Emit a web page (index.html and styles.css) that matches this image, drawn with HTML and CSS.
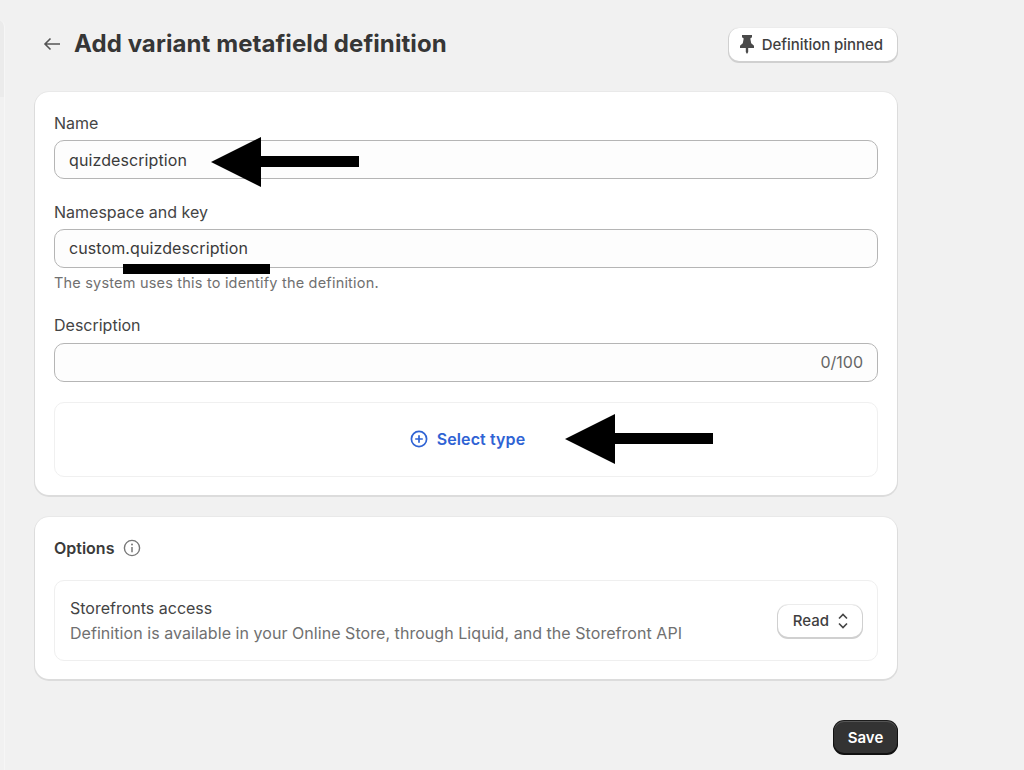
FILE: index.html
```html
<!DOCTYPE html>
<html lang="en">
<head>
<meta charset="utf-8">
<title>Add variant metafield definition</title>
<link rel="stylesheet" href="styles.css">
</head>
<body>
<div class="sidebar-edge"></div>
<main class="page">
  <header class="top">
    <div class="top-left">
      <svg class="back" viewBox="0 0 18 14" width="18" height="14"><path d="M17 7H2M7.5 1.500 2 7l5.500 5.500" fill="none" stroke="#555" stroke-width="1.600"/></svg>
      <h1>Add variant metafield definition</h1>
    </div>
    <button class="btn pin">
      <svg viewBox="0 0 16 20" width="16" height="20"><path d="M3 1h10v2.200l-1.700 1.300.9 4.700 2.800 2.500V14H9.200v4L8 20l-1.200-2v-4H1v-2.300l2.800-2.500.9-4.700L3 3.200z" fill="#4a4a4a"/></svg>
      Definition pinned
    </button>
  </header>

  <section class="card first">
    <div class="field">
      <label>Name</label>
      <div class="input">quizdescription</div>
    </div>
    <div class="field">
      <label>Namespace and key</label>
      <div class="input">custom.quizdescription</div>
      <p class="help">The system uses this to identify the definition.</p>
    </div>
    <div class="field desc">
      <label>Description</label>
      <div class="input count">0/100</div>
    </div>
    <div class="select-type">
      <svg viewBox="0 0 18 18" width="18" height="18"><circle cx="9" cy="9" r="7.600" fill="none" stroke="#2f63d4" stroke-width="1.700"/><path d="M9 5.200v7.600M5.200 9h7.600" stroke="#2f63d4" stroke-width="1.700"/></svg>
      <span>Select type</span>
    </div>
  </section>

  <section class="card second">
    <div class="opt-head">
      <h2>Options</h2>
      <svg viewBox="0 0 18 18" width="18" height="18"><circle cx="9" cy="9" r="7.600" fill="none" stroke="#777" stroke-width="1.400"/><circle cx="9" cy="5.400" r="1" fill="#777"/><path d="M9 8v5.200" stroke="#777" stroke-width="1.500"/></svg>
    </div>
    <div class="access">
      <div>
        <div class="access-title">Storefronts access</div>
        <div class="access-sub">Definition is available in your Online Store, through Liquid, and the Storefront API</div>
      </div>
      <button class="btn read">
        Read
        <svg viewBox="0 0 12 18" width="12" height="18"><path d="M2 6.500 6 2.500l4 4M2 11.500l4 4 4-4" fill="none" stroke="#444" stroke-width="1.600"/></svg>
      </button>
    </div>
  </section>

  <div class="actions"><button class="save">Save</button></div>
</main>

<svg class="mark mark-name" viewBox="0 0 148 50" width="148" height="50"><path d="M0 25 50 0v19h98v11H50v20z" fill="#000"/></svg>
<div class="mark mark-line"></div>
<svg class="mark mark-type" viewBox="0 0 148 50" width="148" height="50"><path d="M0 25 50 0v19h98v11H50v20z" fill="#000"/></svg>
</body>
</html>
```
FILE: styles.css
```css
* { box-sizing: border-box; }
html, body { margin: 0; height: 770px; overflow: hidden; }
body {
  position: relative;
  background: #f1f1f1;
  font-family: Inter, "Liberation Sans", sans-serif;
  color: #3a3a3a;
  font-size: 16px;
}
.sidebar-edge {
  position: absolute;
  left: -10px; top: 20px;
  width: 15px; height: 750px;
  background: linear-gradient(#ebebeb 77px, #f1f1f1 77px);
  border-right: 1px solid #f6f6f6;
  border-radius: 0 7px 0 0;
}
.page {
  width: 862px;
  margin-left: 35px;
  padding-top: 27px;
}
.top {
  display: flex;
  justify-content: space-between;
  align-items: center;
  height: 34px;
  margin-bottom: 31px;
}
.top-left { display: flex; align-items: center; gap: 13px; padding-left: 8px; }
h1 { margin: 0; font-size: 24px; font-weight: 700; line-height: 34px; letter-spacing: .08px; color: #363636; }
.btn {
  display: flex;
  align-items: center;
  background: #fff;
  border: 0;
  border-radius: 10px;
  font: 500 15px Inter, "Liberation Sans", sans-serif;
  color: #3f3f3f;
  box-shadow: 0 1px 0 1px #d0d0d0, 0 0 0 1px #ececec;
}
.pin { height: 33px; gap: 7px; padding: 0 14px 0 10px; letter-spacing: -.05px; }
.card {
  background: #fff;
  border-radius: 14px;
  padding: 19px;
  box-shadow: 0 1px 0 1px #dcdcdc, 0 0 0 1px #e9e9e9;
}
.first { height: 403px; padding-top: 21px; }
.second { height: 162px; margin-top: 22px; padding-top: 21px; }
.field label { display: block; line-height: 20px; height: 20px; margin-bottom: 7px; color: #444; }
.field + .field { margin-top: 23px; }
.field.desc { margin-top: 23px; }
.field.desc label { margin-bottom: 8px; }
.input {
  height: 39px;
  border: 1px solid #b5b5b5;
  border-radius: 10px;
  background: #fdfdfd;
  padding: 0 14px;
  line-height: 37px;
  letter-spacing: .1px;
}
.field:first-child .input { line-height: 38px; }
.input.count { text-align: right; color: #666; letter-spacing: 0; }
.help { margin: 6px 0 0; font-size: 14.500px; line-height: 18px; color: #707070; letter-spacing: .2px; }
.select-type {
  margin-top: 20px;
  height: 75px;
  padding: 0 0 2px 3px;
  border: 1px solid #f0f0f0;
  border-radius: 10px;
  display: flex;
  align-items: center;
  justify-content: center;
  gap: 9px;
  color: #2f63d4;
  font-weight: 600;
  letter-spacing: .1px;
}
.opt-head { display: flex; align-items: center; gap: 9px; height: 19px; }
h2 { margin: 0; font-size: 16px; font-weight: 600; }
.access {
  margin-top: 23px;
  height: 81px;
  border: 1px solid #efefef;
  border-radius: 10px;
  padding: 0 15px;
  display: flex;
  align-items: center;
  justify-content: space-between;
}
.access-title { line-height: 25px; color: #444; }
.access-sub { line-height: 25px; color: #707070; letter-spacing: .05px; }
.read { height: 32px; gap: 8px; padding: 0 13px 0 15px; }
.actions { display: flex; justify-content: flex-end; margin-top: 42px; }
.save {
  width: 63px; height: 32px;
  border: 0;
  border-radius: 10px;
  background: #333;
  color: #fff;
  font: 600 15px Inter, "Liberation Sans", sans-serif;
  box-shadow: 0 1px 0 1px #111, 0 0 0 1px #1c1c1c, inset 0 1px 0 #555;
}
.mark { position: absolute; display: block; }
.mark-name { left: 211px; top: 137px; }
.mark-type { left: 565px; top: 414px; }
.mark-line { left: 123px; top: 264px; width: 147px; height: 10px; background: #000; }
```
